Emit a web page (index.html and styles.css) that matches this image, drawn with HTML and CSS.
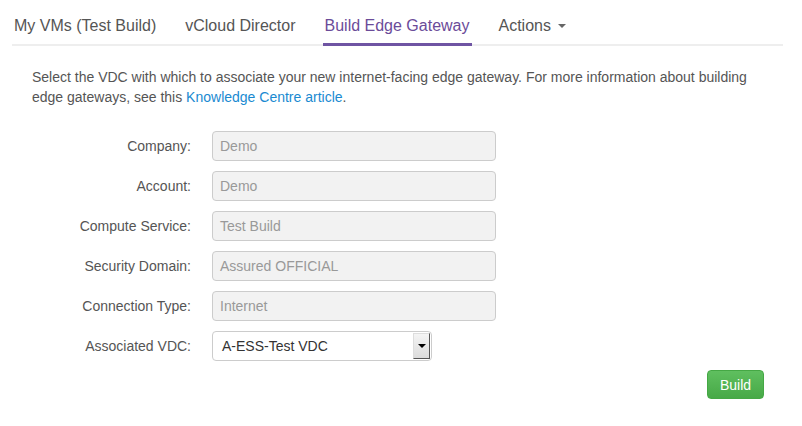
FILE: index.html
```html
<!DOCTYPE html>
<html>
<head>
<meta charset="utf-8">
<link rel="stylesheet" href="styles.css">
</head>
<body>
<div class="nav-wrap">
  <ul class="tabs">
    <li class="tab">My VMs (Test Build)</li>
    <li class="tab">vCloud Director</li>
    <li class="tab active">Build Edge Gateway</li>
    <li class="tab">Actions <span class="caret"></span></li>
  </ul>
</div>
<div class="content">
  <p class="intro">Select the VDC with which to associate your new internet-facing edge gateway. For more information about building edge gateways, see this <a href="#">Knowledge Centre article</a>.</p>
  <div class="form">
    <label>Company:</label><div class="input">Demo</div>
    <label>Account:</label><div class="input">Demo</div>
    <label>Compute Service:</label><div class="input">Test Build</div>
    <label>Security Domain:</label><div class="input">Assured OFFICIAL</div>
    <label>Connection Type:</label><div class="input">Internet</div>
    <label>Associated VDC:</label>
    <div class="select"><span class="sel-text">A-ESS-Test VDC</span><span class="sel-btn"><span class="tri"></span></span></div>
  </div>
  <div class="actions"><button class="btn">Build</button></div>
</div>
</body>
</html>
```
FILE: styles.css
```css
* { box-sizing: border-box; }
body {
  margin: 0;
  font-family: "Liberation Sans", Arial, sans-serif;
  color: #555;
  background: #fff;
}
.nav-wrap {
  padding: 0 19px 0 12px;
}
.tabs {
  list-style: none;
  margin: 0;
  padding: 0;
  display: flex;
  gap: 25px;
  border-bottom: 2px solid #eee;
  height: 46px;
}
.tab {
  font-size: 16px;
  line-height: 18px;
  padding: 17px 2px 0;
  color: #555;
  border-bottom: 3px solid transparent;
  margin-bottom: -2px;
  height: 46px;
}
.tab.active {
  color: #6b4b99;
  border-bottom-color: #6f54a3;
}
.caret {
  display: inline-block;
  width: 0;
  height: 0;
  border-left: 4px solid transparent;
  border-right: 4px solid transparent;
  border-top: 4px solid #666;
  vertical-align: middle;
  margin-left: 3px;
  margin-bottom: 2px;
}
.content {
  padding: 21px 38px 0 32px;
}
.intro {
  margin: 0 0 24px;
  font-size: 14px;
  line-height: 20px;
  color: #555;
}
.intro a {
  color: #1a8ad1;
  text-decoration: none;
}
.form {
  display: grid;
  grid-template-columns: 159px 284px;
  column-gap: 21px;
  row-gap: 10px;
  align-items: center;
}
.form label {
  text-align: right;
  font-size: 14px;
  color: #555;
}
.input {
  height: 30px;
  border: 1px solid #ccc;
  border-radius: 4px;
  background: #f2f2f2;
  color: #999;
  font-size: 14px;
  line-height: 28px;
  padding: 0 7px;
}
.select {
  width: 220px;
  height: 30px;
  border: 1px solid #ccc;
  border-radius: 4px;
  background: #fff;
  display: flex;
  align-items: center;
  justify-content: space-between;
  padding: 0 1px 0 9px;
}
.sel-text {
  font-size: 14px;
  color: #333;
}
.sel-btn {
  width: 17px;
  height: 26px;
  border: 1px solid #555;
  border-top-color: #ddd;
  border-left-color: #ddd;
  background: linear-gradient(#f4f4f4, #dcdcdc);
  display: flex;
  align-items: center;
  justify-content: center;
}
.tri {
  width: 0;
  height: 0;
  border-left: 4px solid transparent;
  border-right: 4px solid transparent;
  border-top: 4px solid #000;
}
.actions {
  display: flex;
  justify-content: flex-end;
  margin-top: 9px;
}
.btn {
  width: 57px;
  height: 29px;
  border: 1px solid #45a845;
  border-radius: 4px;
  background: linear-gradient(#5fbf5f, #47a947);
  color: #fff;
  font-family: "Liberation Sans", Arial, sans-serif;
  font-size: 14px;
  padding: 0;
}
```
